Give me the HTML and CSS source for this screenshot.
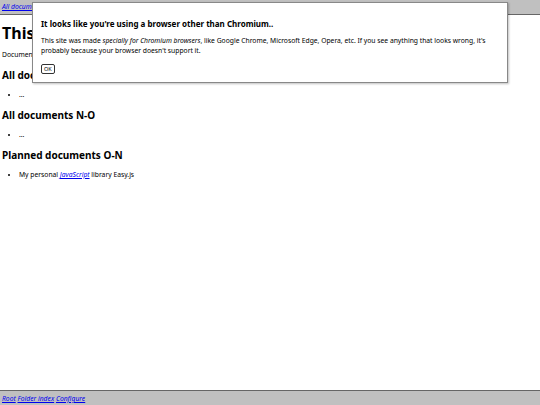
FILE: index.html
```html
<!DOCTYPE html>
<html lang="en">
<head>
<meta charset="UTF-8" />
<title>This folder</title>
<link rel="stylesheet" href="styles.css">
</head>
<body>

<div class="topbar">
  <a href="#">All documents</a>
</div>

<main class="content">
  <h1>This folder</h1>
  <p>Documents in this folder are listed below.</p>

  <h2>All documents A-M</h2>
  <ul>
    <li>...</li>
  </ul>

  <h2>All documents N-O</h2>
  <ul>
    <li>...</li>
  </ul>

  <h2>Planned documents O-N</h2>
  <ul>
    <li>My personal <a href="#">JavaScript</a> library Easy.js</li>
  </ul>
</main>

<div class="bottombar">
  <a href="#">Root</a>
  <a href="#">Folder index</a>
  <a href="#">Configure</a>
</div>

<div class="dialog" id="browserWarning">
  <h3>It looks like you're using a browser other than Chromium..</h3>
  <p>This site was made <em>specially for Chromium browsers</em>, like Google Chrome, Microsoft Edge, Opera, etc. If you see anything that looks wrong, it's probably because your browser doesn't support it.</p>
  <button type="button" onclick="document.getElementById('browserWarning').remove()">OK</button>
</div>

</body>
</html>
```

FILE: styles.css
```css
html, body {
  height: 100%;
}
body {
  margin: 0;
  font-family: 'Noto Sans', sans-serif;
  font-size: 6.75px;
  line-height: 10px;
  color: #000;
  background: #fff;
  display: flex;
  flex-direction: column;
}
a {
  color: #0000ee;
  font-style: italic;
}
.topbar {
  background: #c0c0c0;
  border-bottom: 1px solid #666;
  padding: 2px 2px 2px;
}
.bottombar {
  background: #c0c0c0;
  border-top: 1px solid #666;
  padding: 3px 2px 1px;
}
.content {
  flex: 1;
  padding: 0 2px;
}
h1 {
  font-size: 16px;
  line-height: 22px;
  margin: 7px 0 6px;
}
h2 {
  font-size: 10px;
  line-height: 14px;
  margin: 8px 0;
}
p {
  margin: 0;
}
ul {
  margin: 0;
  padding-left: 17px;
}
.dialog {
  position: absolute;
  top: 2px;
  left: 32px;
  width: 458px;
  padding: 8px;
  background: #fff;
  border: 1px solid #888;
  box-shadow: 1px 1px 2px rgb(0 0 0 / 0.25);
}
.dialog h3 {
  font-size: 8px;
  line-height: 12px;
  margin: 7px 0 6px;
}
.dialog p {
  margin-bottom: 8px;
}
.dialog button {
  display: block;
  font-family: 'Noto Sans', sans-serif;
  font-size: 5.5px;
  line-height: 8px;
  height: 10px;
  padding: 0 2px;
  background: #fff;
  border: 1px solid #333;
  border-radius: 2px;
}
```
